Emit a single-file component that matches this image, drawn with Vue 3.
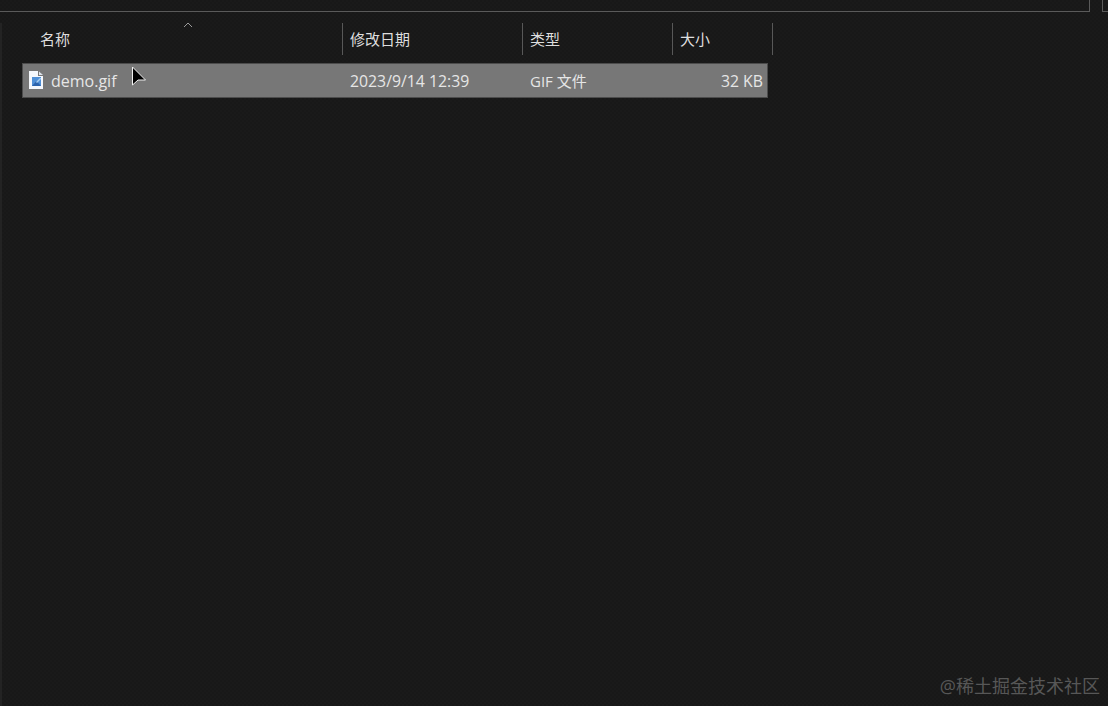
<script setup>
const columns = [
  { label: '名称', width: 321, cls: 'first' },
  { label: '修改日期', width: 180 },
  { label: '类型', width: 150 },
  { label: '大小', width: 100 }
]
</script>

<template>
  <div class="window">
    <div class="topbar">
      <div class="address"></div>
      <div class="search"></div>
    </div>
    <div class="main">
      <div class="sidebar"></div>
      <div class="list">
        <div class="header">
          <svg class="sort" width="10" height="6" viewBox="0 0 10 6"><path d="M1 5 L5 1 L9 5" fill="none" stroke="#9a9a9a" stroke-width="1"/></svg>
          <div v-for="c in columns" :key="c.label" class="col" :class="c.cls" :style="{ width: c.width + 'px' }">{{ c.label }}</div>
        </div>
        <div class="row">
          <div class="cell name">
            <svg class="file" width="15" height="18" viewBox="0 0 15 18">
              <path d="M0 0 H9 L9 5 H14 V18 H0 Z" fill="#f4f7fc"/>
              <path d="M10 0.5 L14 4 H10 Z" fill="#dfe4ec"/>
              <rect x="3" y="6" width="9" height="9" fill="#4f8fd6"/>
              <path d="M3 15 L7.5 10 L12 15 Z" fill="#2a62ad"/>
              <path d="M7 11 L11 7 H12 V8 L8 12 Z" fill="#a8cdf0"/>
            </svg>
            <span>demo.gif</span>
          </div>
          <div class="cell date">2023/9/14 12:39</div>
          <div class="cell type">GIF 文件</div>
          <div class="cell size">32 KB</div>
        </div>
      </div>
    </div>
    <svg class="cursor" width="16" height="22" viewBox="0 0 16 22">
      <path d="M1.5 1 V19 L7 14 H14.5 Z" fill="#000" stroke="#f0f0f0" stroke-width="1"/>
    </svg>
    <div class="watermark">@稀土掘金技术社区</div>
  </div>
</template>

<style>
html, body { margin: 0; background: #191919; }
</style>

<style scoped>
.window {
  position: relative;
  width: 1108px;
  height: 706px;
  overflow: hidden;
  background: repeating-conic-gradient(#1a1a1a 0 25%, #181818 0 50%) 0 0 / 4px 4px;
  color: #dcdcdc;
  font-family: "Segoe UI", "Open Sans", "Noto Sans CJK SC", sans-serif;
}
.topbar {
  display: flex;
  height: 12px;
}
.address {
  width: 1089px;
  height: 11px;
  border-right: 1px solid #5a5a5a;
  border-bottom: 1px solid #5a5a5a;
}
.search {
  margin-left: 12px;
  flex: 1;
  height: 11px;
  border-left: 1px solid #5a5a5a;
  border-bottom: 1px solid #5a5a5a;
}
.main {
  display: flex;
  height: 694px;
}
.sidebar {
  width: 2px;
  margin-top: 11px;
  background: #232323;
}
.list {
  margin-left: 20px;
}
.header {
  position: relative;
  display: flex;
  height: 32px;
  margin-top: 11px;
  width: 751px;
}
.sort {
  position: absolute;
  left: 161px;
  top: -1px;
}
.col {
  box-sizing: border-box;
  height: 32px;
  padding-left: 7px;
  border-right: 1px solid #585858;
  font-size: 15px;
  line-height: 32px;
  color: #dedede;
}
.col.first {
  padding-left: 18px;
}
.row {
  display: flex;
  align-items: center;
  box-sizing: border-box;
  width: 746px;
  height: 35px;
  margin-top: 8px;
  padding-top: 1px;
  background: #777777;
  border: 1px solid #4c4c4c;
  font-size: 15.8px;
  color: #e6e6e6;
}
.cell {
  box-sizing: border-box;
  white-space: nowrap;
}
.name {
  display: flex;
  align-items: center;
  width: 327px;
  padding-left: 6px;
  gap: 7px;
  font-size: 16px;
}
.file {
  margin-top: -2px;
}
.date { width: 180px; }
.type { width: 150px; font-size: 15px; margin-top: -2px; }
.size { width: 83px; text-align: right; }
.cursor {
  position: absolute;
  left: 131px;
  top: 66px;
}
.watermark {
  position: absolute;
  right: 8px;
  bottom: 8px;
  font-size: 18px;
  color: #575757;
  white-space: nowrap;
}
</style>
